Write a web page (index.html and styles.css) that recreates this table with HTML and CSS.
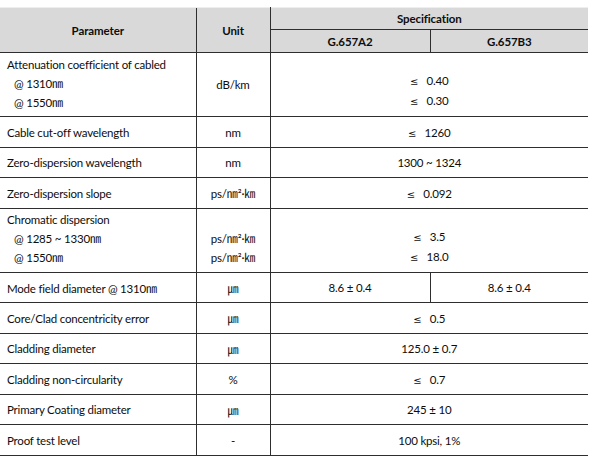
FILE: index.html
```html
<!DOCTYPE html>
<html lang="en">
<head>
<meta charset="utf-8">
<title>Fiber specification</title>
<link rel="stylesheet" href="styles.css">
</head>
<body>
<table class="spec">
  <colgroup>
    <col class="c-param">
    <col class="c-unit">
    <col class="c-a2">
    <col class="c-b3">
  </colgroup>
  <thead>
    <tr class="h1">
      <th rowspan="2" class="hc">Parameter</th>
      <th rowspan="2" class="hc">Unit</th>
      <th colspan="2" class="hs">Specification</th>
    </tr>
    <tr class="h2">
      <th class="hs">G.657A2</th>
      <th class="hs">G.657B3</th>
    </tr>
  </thead>
  <tbody>
    <tr class="tall">
      <td class="param top p1">
        <div class="ln">Attenuation coefficient of cabled</div>
        <div class="ln ind">@ 1310<span class="cjk">㎚</span></div>
        <div class="ln ind">@ 1550<span class="cjk">㎚</span></div>
      </td>
      <td class="unit">dB/km</td>
      <td colspan="2" class="val top v1">
        <div class="ln"><span class="le">≤</span>&nbsp;&nbsp; 0.40</div>
        <div class="ln"><span class="le">≤</span>&nbsp;&nbsp; 0.30</div>
      </td>
    </tr>
    <tr class="odd">
      <td class="param">Cable cut-off wavelength</td>
      <td class="unit">nm</td>
      <td colspan="2" class="val"><span class="le">≤</span>&nbsp;&nbsp; 1260</td>
    </tr>
    <tr class="even">
      <td class="param">Zero-dispersion wavelength</td>
      <td class="unit">nm</td>
      <td colspan="2" class="val">1300 ~ 1324</td>
    </tr>
    <tr class="odd">
      <td class="param">Zero-dispersion slope</td>
      <td class="unit">ps/<span class="cjk">㎚</span>²·<span class="cjk">㎞</span></td>
      <td colspan="2" class="val"><span class="le">≤</span>&nbsp;&nbsp; 0.092</td>
    </tr>
    <tr class="tall">
      <td class="param top p5">
        <div class="ln">Chromatic dispersion</div>
        <div class="ln ind">@ 1285 ~ 1330<span class="cjk">㎚</span></div>
        <div class="ln ind">@ 1550<span class="cjk">㎚</span></div>
      </td>
      <td class="unit top u5">
        <div class="ln">ps/<span class="cjk">㎚</span>²·<span class="cjk">㎞</span></div>
        <div class="ln">ps/<span class="cjk">㎚</span>²·<span class="cjk">㎞</span></div>
      </td>
      <td colspan="2" class="val top v5">
        <div class="ln"><span class="le">≤</span>&nbsp;&nbsp; 3.5</div>
        <div class="ln"><span class="le">≤</span>&nbsp;&nbsp; 18.0</div>
      </td>
    </tr>
    <tr class="even">
      <td class="param">Mode field diameter @ 1310<span class="cjk">㎚</span></td>
      <td class="unit"><span class="cjk">㎛</span></td>
      <td class="val split">8.6 ± 0.4</td>
      <td class="val">8.6 ± 0.4</td>
    </tr>
    <tr class="odd">
      <td class="param">Core/Clad concentricity error</td>
      <td class="unit"><span class="cjk">㎛</span></td>
      <td colspan="2" class="val"><span class="le">≤</span>&nbsp;&nbsp; 0.5</td>
    </tr>
    <tr class="even">
      <td class="param">Cladding diameter</td>
      <td class="unit"><span class="cjk">㎛</span></td>
      <td colspan="2" class="val">125.0 ± 0.7</td>
    </tr>
    <tr class="odd">
      <td class="param">Cladding non-circularity</td>
      <td class="unit">%</td>
      <td colspan="2" class="val"><span class="le">≤</span>&nbsp;&nbsp; 0.7</td>
    </tr>
    <tr class="even">
      <td class="param">Primary Coating diameter</td>
      <td class="unit"><span class="cjk">㎛</span></td>
      <td colspan="2" class="val">245 ± 10</td>
    </tr>
    <tr class="odd">
      <td class="param">Proof test level</td>
      <td class="unit">-</td>
      <td colspan="2" class="val">100 kpsi, 1%</td>
    </tr>
  </tbody>
</table>
</body>
</html>
```
FILE: styles.css
```css
html, body {
  margin: 0;
  padding: 0;
  background: #ffffff;
}
body {
  padding-top: 7px;
  font-family: Lato, "Noto Sans", sans-serif;
  font-size: 11.5px;
  letter-spacing: -0.2px;
  color: #0d0d0d;
}
.spec {
  width: 588px;
  table-layout: fixed;
  border-collapse: collapse;
}
.c-param { width: 196px; }
.c-unit { width: 74px; }
.c-a2 { width: 160px; }
.c-b3 { width: 158px; }

th, td {
  padding: 0;
  border-bottom: 1px solid #2e2e2e;
  white-space: nowrap;
}
thead th {
  background: #d9d9d9;
  font-weight: 700;
  font-size: 11.5px;
  letter-spacing: -0.1px;
  text-align: center;
  vertical-align: middle;
}
thead tr.h1 th { border-top: 1px solid #eeeeee; }
.h1 { height: 22px; }
.h2 { height: 23px; }
.hc + .hc { border-left: 1px solid #2e2e2e; border-right: 1px solid #2e2e2e; }
.h2 th + th { border-left: 1px solid #2e2e2e; }

td { vertical-align: middle; }
.odd { height: 31px; }
.even { height: 30px; }
.tall { height: 64px; }

.param { padding-left: 7px; text-align: left; }
.unit {
  text-align: center;
  border-left: 1px solid #2e2e2e;
  border-right: 1px solid #2e2e2e;
}
.val { text-align: center; }
.split { border-right: 1px solid #2e2e2e; }

.top { vertical-align: top; }
.ln { line-height: 19px; }
.ind { padding-left: 7px; }
.p1 { padding-top: 2px; }
.v1 { padding-top: 18px; }
.p5 { padding-top: 1px; }
.u5 { padding-top: 20px; }
.v5 { padding-top: 18px; }

.le {
  font-family: "DejaVu Sans", sans-serif;
  font-size: 10px;
}
.cjk {
  font-family: "Noto Sans CJK SC", sans-serif;
  font-size: 11px;
  letter-spacing: 0;
}
```
